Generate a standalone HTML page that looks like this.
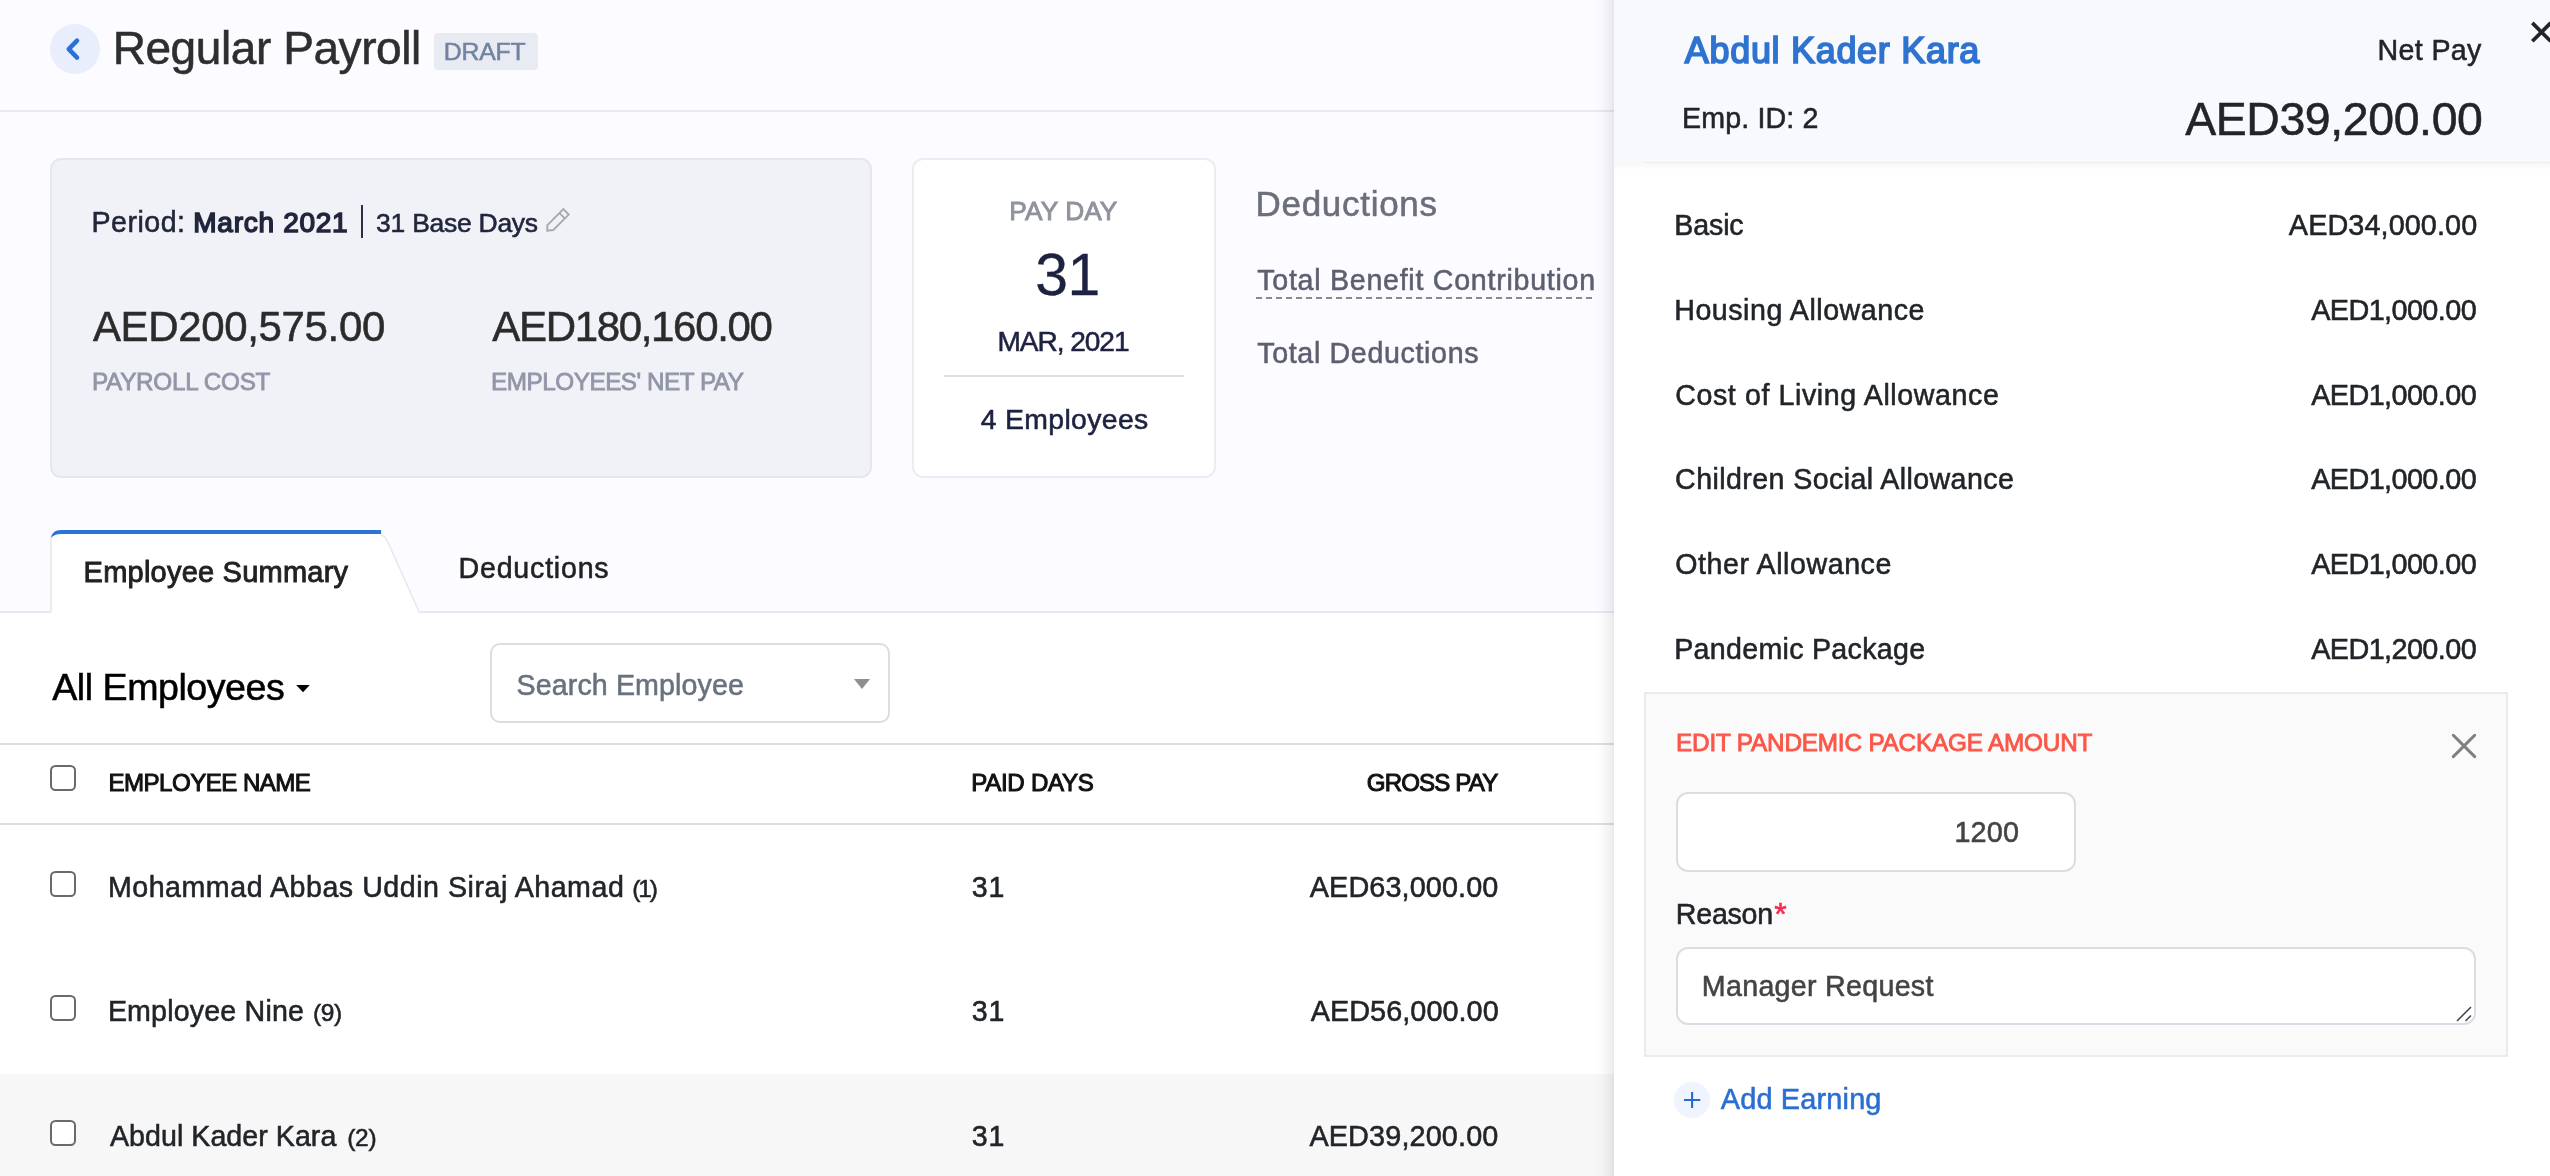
<!DOCTYPE html>
<html lang="en"><head><meta charset="utf-8"><title>Regular Payroll</title>
<style>
html,body{margin:0;padding:0;}
body{width:2550px;height:1176px;overflow:hidden;position:relative;background:#fcfbff;font-family:"Liberation Sans", sans-serif;}
.tx{position:absolute;left:0;top:0;width:2550px;height:1176px;will-change:transform;}
.t{position:absolute;white-space:nowrap;}
.b{position:absolute;box-sizing:border-box;}
svg{position:absolute;overflow:visible;}

.cb{position:absolute;box-sizing:border-box;width:26px;height:26px;border:2px solid #696a6b;border-radius:5.5px;background:#fff;}

</style></head><body>

<!-- header -->
<div class="b" style="left:0;top:110px;width:1614px;height:2px;background:#e9e9ee"></div>
<div class="b" style="left:50px;top:24px;width:50px;height:50px;border-radius:50%;background:#e8eefb"></div>
<svg style="left:50px;top:24px" width="50" height="50" viewBox="0 0 50 50"><path d="M27.05 16.65 L18.75 25.1 L27.05 33.55" fill="none" stroke="#2a70d6" stroke-width="4.5" stroke-linecap="round" stroke-linejoin="round"/></svg>
<div class="b" style="left:434px;top:33px;width:104px;height:37px;border-radius:4px;background:#e9ebf3"></div>
<!-- summary card -->
<div class="b" style="left:50px;top:158px;width:822px;height:320px;border-radius:11px;background:#f1f2f7;border:2px solid #e6e7ee"></div>
<div class="b" style="left:361px;top:205px;width:2.4px;height:33px;background:#2a2f45"></div>
<svg style="left:0;top:0" width="2550" height="1176" viewBox="0 0 2550 1176"><path d="M563.4 209.2 L568.7 214.6 L553.3 230 L547.3 230.7 L547.4 225.1 Z M559.6 213.2 L564.6 218.4" fill="none" stroke="#a9a9ab" stroke-width="1.9" stroke-linejoin="miter"/></svg>
<!-- pay day card -->
<div class="b" style="left:912px;top:158px;width:304px;height:320px;border-radius:11px;background:#fff;border:2px solid #ececf2"></div>
<div class="b" style="left:944px;top:375px;width:240px;height:2px;background:#dfe0e6"></div>
<!-- deductions underline -->
<svg style="left:0;top:0" width="2550" height="1176" viewBox="0 0 2550 1176"><path d="M1256 298 L1596 298" stroke="#8a8a8c" stroke-width="2" stroke-dasharray="6 4" fill="none"/></svg>
<!-- tabs + white content -->
<div class="b" style="left:0;top:611px;width:1614px;height:565px;background:#fff;border-top:2px solid #e9e9ed"></div>
<svg style="left:0;top:0" width="2550" height="1176" viewBox="0 0 2550 1176">
  <path d="M51 613 L51 538 Q51 532 59 532 L374 532 Q383 533 387.6 541.3 L419.4 613 Z" fill="#fff"/>
  <path d="M51 612.5 L51 538 Q51 532 59 532 L374 532 Q383 533 387.6 541.3 L419.4 612.5" fill="none" stroke="#e9e9ed" stroke-width="1.6"/>
  <path d="M51.3 538 Q52 530 61 530 L381.1 530 L381.1 534 L61 534 Q54 534 51.3 538 Z" fill="#2d72d6"/>
</svg>
<!-- caret for All Employees -->
<svg style="left:0;top:0" width="2550" height="1176" viewBox="0 0 2550 1176"><path d="M296.2 685 L309.8 685 L303 692.3 Z" fill="#000"/></svg>
<!-- search box -->
<div class="b" style="left:490px;top:643px;width:400px;height:80px;border-radius:10px;background:#fff;border:2px solid #dcdde4"></div>
<svg style="left:854px;top:679px" width="16" height="10" viewBox="0 0 16 10"><path d="M0 0 L16 0 L8 10 Z" fill="#8f8f8f"/></svg>
<!-- table -->
<div class="b" style="left:0;top:743px;width:1614px;height:2px;background:#dedede"></div>
<div class="b" style="left:0;top:823px;width:1614px;height:2px;background:#dedede"></div>
<div class="b" style="left:0;top:1074px;width:1614px;height:102px;background:#f7f7f7"></div>
<div class="cb" style="left:50px;top:765px"></div>
<div class="cb" style="left:50px;top:871px"></div>
<div class="cb" style="left:50px;top:995px"></div>
<div class="cb" style="left:50px;top:1120px"></div>

<!-- right panel -->
<div class="b" style="left:1614px;top:-30px;width:960px;height:1240px;background:#fff;box-shadow:0 0 18px rgba(30,30,60,0.19)"></div>
<div class="b" style="left:1614px;top:162px;width:936px;height:8px;background:linear-gradient(#f6f6f7,#fff)"></div>
<div class="b" style="left:1644px;top:162px;width:906px;height:1.3px;background:#eeeeef"></div>
<div class="b" style="left:1614px;top:0;width:936px;height:162px;background:#f8f9fd;"></div>
<svg style="left:0;top:0" width="2550" height="1176" viewBox="0 0 2550 1176"><path d="M2532.3 22.9 L2550.7 41.3 M2532.3 41.3 L2550.7 22.9" stroke="#212529" stroke-width="3.7" fill="none"/></svg>
<!-- edit box -->
<div class="b" style="left:1644px;top:692px;width:864px;height:365px;background:#fafafb;border:2px solid #ebebee"></div>
<svg style="left:0;top:0" width="2550" height="1176" viewBox="0 0 2550 1176"><path d="M2453.3 735.3 L2474.7 756.6 M2474.7 735.3 L2453.3 756.6" stroke="#7f7f7f" stroke-width="3" stroke-linecap="round" fill="none"/></svg>
<div class="b" style="left:1676px;top:792px;width:400px;height:80px;border-radius:12px;background:#fff;border:2px solid #dcdce4"></div>
<div class="b" style="left:1676px;top:947px;width:800px;height:78px;border-radius:12px;background:#fff;border:2px solid #dcdce4"></div>
<svg style="left:2456px;top:1006px" width="16" height="16" viewBox="0 0 16 16"><path d="M1 15 L15 1 M9.5 15 L15 9.5" stroke="#444" stroke-width="1.5" fill="none"/></svg>
<!-- add earning -->
<div class="b" style="left:1674px;top:1082px;width:36px;height:36px;border-radius:50%;background:#f0f4fe"></div>
<svg style="left:0;top:0" width="2550" height="1176" viewBox="0 0 2550 1176"><path d="M1692.1 1091.9 L1692.1 1108 M1684 1100 L1700.3 1100" stroke="#2669d0" stroke-width="2.1" fill="none"/></svg>

<div class="tx">
<span class="t" id="t0" style="left:112.63px;top:24.96px;font-size:46px;line-height:46px;color:#2e2e2e;letter-spacing:-0.418px;-webkit-text-stroke:0.55px;">Regular Payroll</span>
<span class="t" id="t1" style="left:443.75px;top:39.82px;font-size:24.8px;line-height:24.8px;color:#7283a1;letter-spacing:-0.162px;-webkit-text-stroke:0.55px;">DRAFT</span>
<span class="t" id="t2" style="left:91.41px;top:207.99px;font-size:28.6px;line-height:28.6px;color:#21263c;letter-spacing:0.500px;-webkit-text-stroke:0.55px;">Period:</span>
<span class="t" id="t3" style="left:193.33px;top:208.76px;font-size:28px;line-height:28px;color:#21263c;letter-spacing:0.715px;-webkit-text-stroke:1.5px;">March 2021</span>
<span class="t" id="t4" style="left:376.11px;top:209.76px;font-size:26.5px;line-height:26.5px;color:#21263c;letter-spacing:-0.274px;-webkit-text-stroke:0.55px;">31 Base Days</span>
<span class="t" id="t5" style="left:92.95px;top:305.75px;font-size:42px;line-height:42px;color:#2b2b2b;letter-spacing:-0.355px;-webkit-text-stroke:0.55px;">AED200,575.00</span>
<span class="t" id="t6" style="left:92.04px;top:369.83px;font-size:24.3px;line-height:24.3px;color:#9196a8;letter-spacing:-0.312px;-webkit-text-stroke:0.8px;">PAYROLL COST</span>
<span class="t" id="t7" style="left:492.36px;top:305.75px;font-size:42px;line-height:42px;color:#2b2b2b;letter-spacing:-1.337px;-webkit-text-stroke:0.55px;">AED180,160.00</span>
<span class="t" id="t8" style="left:491.09px;top:369.83px;font-size:24.3px;line-height:24.3px;color:#9196a8;letter-spacing:-0.489px;-webkit-text-stroke:0.8px;">EMPLOYEES' NET PAY</span>
<span class="t" id="t9" style="left:1009.34px;top:197.84px;font-size:26.3px;line-height:26.3px;color:#8f939d;letter-spacing:0.063px;-webkit-text-stroke:0.9px;">PAY DAY</span>
<span class="t" id="t10" style="left:1035.37px;top:245.53px;font-size:59px;line-height:59px;color:#1d2240;letter-spacing:-0.577px;-webkit-text-stroke:0.3px;">31</span>
<span class="t" id="t11" style="left:997.42px;top:327.71px;font-size:28.1px;line-height:28.1px;color:#1d2240;letter-spacing:-1.053px;-webkit-text-stroke:0.55px;">MAR, 2021</span>
<span class="t" id="t12" style="left:980.63px;top:404.96px;font-size:28.4px;line-height:28.4px;color:#1d2240;letter-spacing:0.354px;-webkit-text-stroke:0.55px;">4 Employees</span>
<span class="t" id="t13" style="left:1255.48px;top:185.77px;font-size:35px;line-height:35px;color:#6b6e7b;letter-spacing:0.720px;-webkit-text-stroke:0.55px;">Deductions</span>
<span class="t" id="t14" style="left:1257.22px;top:265.59px;font-size:28.6px;line-height:28.6px;color:#5c5f70;letter-spacing:0.735px;-webkit-text-stroke:0.55px;">Total Benefit Contribution</span>
<span class="t" id="t15" style="left:1257.24px;top:338.59px;font-size:28.6px;line-height:28.6px;color:#5c5f70;letter-spacing:0.657px;-webkit-text-stroke:0.55px;">Total Deductions</span>
<span class="t" id="t16" style="left:83.62px;top:557.75px;font-size:29px;line-height:29px;color:#222;letter-spacing:0.221px;-webkit-text-stroke:0.9px;">Employee Summary</span>
<span class="t" id="t17" style="left:458.58px;top:554.19px;font-size:28.6px;line-height:28.6px;color:#222;letter-spacing:0.780px;-webkit-text-stroke:0.55px;">Deductions</span>
<span class="t" id="t18" style="left:52.17px;top:669.09px;font-size:37.6px;line-height:37.6px;color:#000;letter-spacing:-0.456px;-webkit-text-stroke:0.55px;">All Employees</span>
<span class="t" id="t19" style="left:516.53px;top:671.09px;font-size:28.6px;line-height:28.6px;color:#68727f;letter-spacing:0.121px;-webkit-text-stroke:0.55px;">Search Employee</span>
<span class="t" id="t20" style="left:108.45px;top:770.80px;font-size:24.1px;line-height:24.1px;color:#111;letter-spacing:-0.530px;-webkit-text-stroke:1.0px;">EMPLOYEE NAME</span>
<span class="t" id="t21" style="left:971.18px;top:770.80px;font-size:24.1px;line-height:24.1px;color:#111;letter-spacing:-0.282px;-webkit-text-stroke:1.0px;">PAID DAYS</span>
<span class="t" id="t22" style="left:1366.74px;top:770.80px;font-size:24.1px;line-height:24.1px;color:#111;letter-spacing:-0.848px;-webkit-text-stroke:1.0px;">GROSS PAY</span>
<span class="t" id="t23" style="left:107.90px;top:872.69px;font-size:28.6px;line-height:28.6px;color:#212529;letter-spacing:0.526px;-webkit-text-stroke:0.55px;">Mohammad Abbas Uddin Siraj Ahamad</span>
<span class="t" id="t24" style="left:632.36px;top:877.06px;font-size:24.5px;line-height:24.5px;color:#212529;letter-spacing:-2.167px;-webkit-text-stroke:0.55px;">(1)</span>
<span class="t" id="t25" style="left:971.67px;top:872.69px;font-size:28.6px;line-height:28.6px;color:#212529;letter-spacing:1.050px;-webkit-text-stroke:0.55px;">31</span>
<span class="t" id="t26" style="left:1309.77px;top:872.52px;font-size:28.8px;line-height:28.8px;color:#212529;letter-spacing:0.111px;-webkit-text-stroke:0.55px;">AED63,000.00</span>
<span class="t" id="t27" style="left:107.88px;top:997.09px;font-size:28.6px;line-height:28.6px;color:#212529;letter-spacing:0.177px;-webkit-text-stroke:0.55px;">Employee Nine</span>
<span class="t" id="t28" style="left:313.10px;top:1000.56px;font-size:24.5px;line-height:24.5px;color:#212529;letter-spacing:-0.402px;-webkit-text-stroke:0.55px;">(9)</span>
<span class="t" id="t29" style="left:971.67px;top:997.09px;font-size:28.6px;line-height:28.6px;color:#212529;letter-spacing:1.050px;-webkit-text-stroke:0.55px;">31</span>
<span class="t" id="t30" style="left:1310.72px;top:996.92px;font-size:28.8px;line-height:28.8px;color:#212529;letter-spacing:0.060px;-webkit-text-stroke:0.55px;">AED56,000.00</span>
<span class="t" id="t31" style="left:109.95px;top:1122.09px;font-size:28.6px;line-height:28.6px;color:#212529;letter-spacing:0.044px;-webkit-text-stroke:0.55px;">Abdul Kader Kara</span>
<span class="t" id="t32" style="left:347.26px;top:1125.56px;font-size:24.5px;line-height:24.5px;color:#212529;letter-spacing:-0.308px;-webkit-text-stroke:0.55px;">(2)</span>
<span class="t" id="t33" style="left:971.67px;top:1122.09px;font-size:28.6px;line-height:28.6px;color:#212529;letter-spacing:1.050px;-webkit-text-stroke:0.55px;">31</span>
<span class="t" id="t34" style="left:1309.42px;top:1121.92px;font-size:28.8px;line-height:28.8px;color:#212529;letter-spacing:0.146px;-webkit-text-stroke:0.55px;">AED39,200.00</span>
<span class="t" id="t35" style="left:1684.77px;top:32.83px;font-size:36px;line-height:36px;color:#2f73d0;letter-spacing:0.692px;-webkit-text-stroke:1.7px;">Abdul Kader Kara</span>
<span class="t" id="t36" style="left:2377.48px;top:35.99px;font-size:28.6px;line-height:28.6px;color:#212529;letter-spacing:0.367px;-webkit-text-stroke:0.55px;">Net Pay</span>
<span class="t" id="t37" style="left:1682.07px;top:103.79px;font-size:28.6px;line-height:28.6px;color:#212529;letter-spacing:0.141px;-webkit-text-stroke:0.55px;">Emp. ID: 2</span>
<span class="t" id="t38" style="left:2185.13px;top:96.22px;font-size:46.4px;line-height:46.4px;color:#212529;letter-spacing:-0.366px;-webkit-text-stroke:0.55px;">AED39,200.00</span>
<span class="t" id="t39" style="left:1674.27px;top:210.99px;font-size:28.6px;line-height:28.6px;color:#212529;letter-spacing:-0.130px;-webkit-text-stroke:0.55px;">Basic</span>
<span class="t" id="t40" style="left:2288.86px;top:210.82px;font-size:28.8px;line-height:28.8px;color:#212529;letter-spacing:0.090px;-webkit-text-stroke:0.55px;">AED34,000.00</span>
<span class="t" id="t41" style="left:1674.20px;top:296.09px;font-size:28.6px;line-height:28.6px;color:#212529;letter-spacing:0.539px;-webkit-text-stroke:0.55px;">Housing Allowance</span>
<span class="t" id="t42" style="left:2311.20px;top:295.92px;font-size:28.8px;line-height:28.8px;color:#212529;letter-spacing:-0.582px;-webkit-text-stroke:0.55px;">AED1,000.00</span>
<span class="t" id="t43" style="left:1675.19px;top:380.99px;font-size:28.6px;line-height:28.6px;color:#212529;letter-spacing:0.595px;-webkit-text-stroke:0.55px;">Cost of Living Allowance</span>
<span class="t" id="t44" style="left:2311.20px;top:380.82px;font-size:28.8px;line-height:28.8px;color:#212529;letter-spacing:-0.582px;-webkit-text-stroke:0.55px;">AED1,000.00</span>
<span class="t" id="t45" style="left:1675.12px;top:464.79px;font-size:28.6px;line-height:28.6px;color:#212529;letter-spacing:0.405px;-webkit-text-stroke:0.55px;">Children Social Allowance</span>
<span class="t" id="t46" style="left:2311.20px;top:464.62px;font-size:28.8px;line-height:28.8px;color:#212529;letter-spacing:-0.582px;-webkit-text-stroke:0.55px;">AED1,000.00</span>
<span class="t" id="t47" style="left:1675.25px;top:549.59px;font-size:28.6px;line-height:28.6px;color:#212529;letter-spacing:0.564px;-webkit-text-stroke:0.55px;">Other Allowance</span>
<span class="t" id="t48" style="left:2311.20px;top:550.22px;font-size:28.8px;line-height:28.8px;color:#212529;letter-spacing:-0.582px;-webkit-text-stroke:0.55px;">AED1,000.00</span>
<span class="t" id="t49" style="left:1674.23px;top:634.59px;font-size:28.6px;line-height:28.6px;color:#212529;letter-spacing:0.298px;-webkit-text-stroke:0.55px;">Pandemic Package</span>
<span class="t" id="t50" style="left:2311.20px;top:635.22px;font-size:28.8px;line-height:28.8px;color:#212529;letter-spacing:-0.582px;-webkit-text-stroke:0.55px;">AED1,200.00</span>
<span class="t" id="t51" style="left:1676.07px;top:730.93px;font-size:24.3px;line-height:24.3px;color:#fb5748;letter-spacing:-0.181px;-webkit-text-stroke:0.9px;">EDIT PANDEMIC PACKAGE AMOUNT</span>
<span class="t" id="t52" style="left:1954.45px;top:817.52px;font-size:28.8px;line-height:28.8px;color:#444;letter-spacing:0.172px;-webkit-text-stroke:0.55px;">1200</span>
<span class="t" id="t53" style="left:1675.86px;top:899.79px;font-size:28.6px;line-height:28.6px;color:#212529;letter-spacing:-0.248px;-webkit-text-stroke:0.55px;">Reason</span>
<span class="t" id="t54" style="left:1774.27px;top:897.91px;font-size:32px;line-height:32px;color:#f8284e;-webkit-text-stroke:0.55px;">*</span>
<span class="t" id="t55" style="left:1701.85px;top:971.59px;font-size:28.6px;line-height:28.6px;color:#444;letter-spacing:0.303px;-webkit-text-stroke:0.55px;">Manager Request</span>
<span class="t" id="t56" style="left:1720.71px;top:1085.33px;font-size:28.9px;line-height:28.9px;color:#2a6ed2;letter-spacing:0.172px;-webkit-text-stroke:0.55px;">Add Earning</span>
</div>
</body></html>
